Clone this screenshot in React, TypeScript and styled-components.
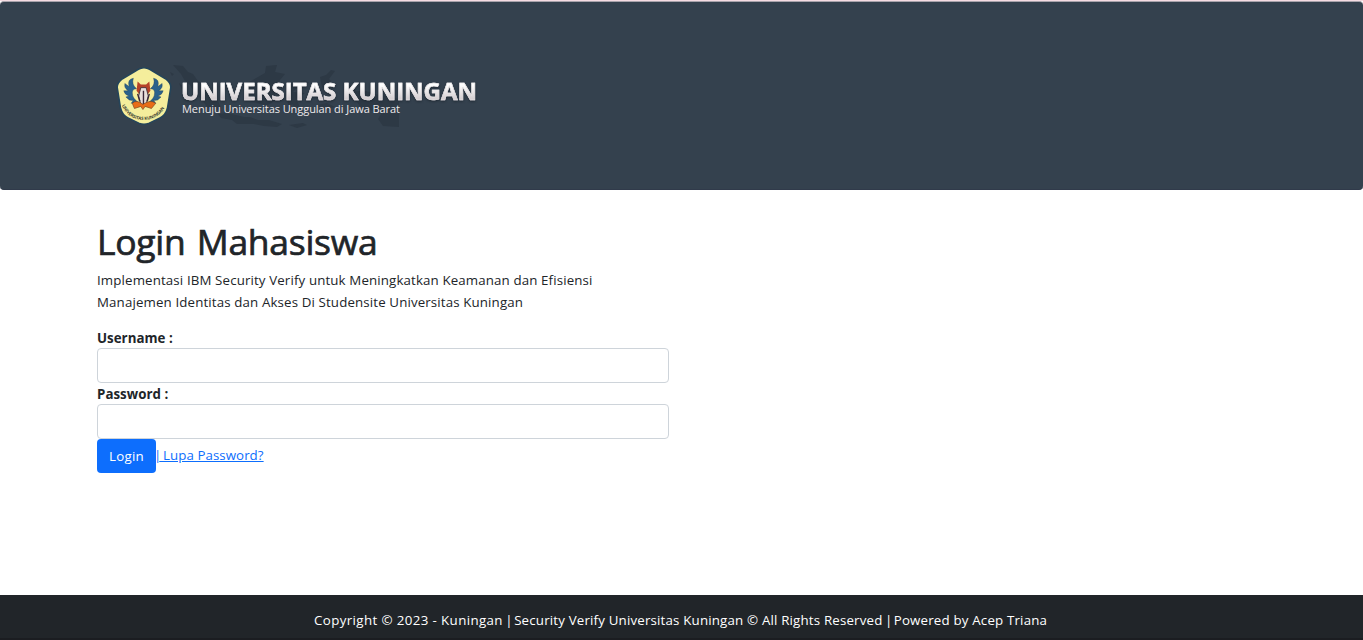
import React from "react";
import styled, { createGlobalStyle } from "styled-components";

const GlobalStyle = createGlobalStyle`
  *, *::before, *::after { box-sizing: border-box; }
  body {
    margin: 0;
    background: #fff;
    color: #212529;
    font-family: "Open Sans", "Noto Sans", sans-serif;
    font-size: 13.3px;
    line-height: 22px;
    overflow: hidden;
  }
`;

const Page = styled.div`
  display: flex;
  flex-direction: column;
  height: 640px;
  border-top: 1px solid #f6dce3;
`;

const Banner = styled.header`
  height: 189px;
  flex: none;
  padding: 61px 0 0 116px;
  margin-bottom: 30px;
  background: #34414e;
  border-top: 1px solid #a9a3ac;
  border-bottom: 1px solid #303a4a;
  border-radius: 4px;
`;

const Brand = styled.div`
  display: grid;
  grid-template-columns: 65px 1fr;
  width: 364px;
  height: 68px;
`;

const Crest = styled.svg`
  grid-area: 1 / 1;
  width: 56px;
  height: 58px;
  margin-top: 4px;
`;

const Archipelago = styled.svg`
  grid-area: 1 / 1 / 2 / 3;
  width: 240px;
  height: 66px;
  margin-left: 50px;
`;

const BrandText = styled.div`
  grid-area: 1 / 2;
  padding-top: 16px;
  color: #eeeaec;
  white-space: nowrap;
`;

const BrandName = styled.div`
  font-size: 24px;
  line-height: 24px;
  font-weight: 700;
  color: transparent;
  background: linear-gradient(#ffffff 25%, #d6d0d3 80%);
  background-clip: text;
  -webkit-text-stroke: 0.5px #e9e5e7;
  filter: drop-shadow(0 1px 1px #1f2933);
`;

const Tagline = styled.div`
  margin: -1px 0 0 1px;
  font-size: 11px;
  line-height: 14px;
  letter-spacing: -0.06px;
`;

const Main = styled.main`
  flex: 1;
  padding-left: 97px;
`;

const Title = styled.h1`
  margin: 0 0 6px;
  font-size: 35.5px;
  line-height: 43px;
  font-weight: 500;
  letter-spacing: -0.3px;
  word-spacing: 2.5px;
  -webkit-text-stroke: 0.7px #212529;
  white-space: nowrap;
`;

const Lead = styled.p`
  margin: 0 0 14px;
  white-space: nowrap;
`;

const Line = styled.span<{ $spacing: number }>`
  display: block;
  letter-spacing: ${(p) => p.$spacing}px;
`;

const Form = styled.form`
  display: flex;
  flex-direction: column;
  width: 572px;
`;

const Label = styled.label`
  height: 21px;
  font-weight: 700;
  letter-spacing: 0.03px;
  line-height: 22px;
`;

const Field = styled.input`
  height: 35px;
  padding: 6px 12px;
  border: 1px solid #ced4da;
  border-radius: 4px;
  background: #fff;
  font: inherit;
`;

const Actions = styled.div`
  display: flex;
`;

const LoginButton = styled.button`
  width: 59px;
  height: 34px;
  padding: 0;
  border: 0;
  border-radius: 4px;
  background: #0d6efd;
  color: #fff;
  font: inherit;
  letter-spacing: 0.3px;
`;

const ForgotLink = styled.a`
  margin-top: 5px;
  margin-left: -2px;
  color: #0d6efd;
  letter-spacing: 0.06px;
  text-decoration: underline;
`;

const Pipe = styled.span<{ $spacing: number }>`
  letter-spacing: ${(p) => p.$spacing}px;
`;

const Footer = styled.footer`
  height: 45px;
  padding-top: 14px;
  padding-left: 314px;
  background: #212529;
  border-bottom: 2px solid #1b1d21;
  color: #fff;
  letter-spacing: 0.18px;
  white-space: nowrap;
`;

const Copyright = styled.span`
  letter-spacing: 0.39px;
`;

function CrestMark() {
  return (
    <Crest viewBox="1.7 1.2 52.6 55.6" preserveAspectRatio="none">
      <path d="M28 2 Q31 2 36 5 L49 13 Q54 17 53 22 L50 41 Q48 48 43 50 L33 55 Q28 57 23 55 L13 50 Q8 48 6 41 L3 22 Q2 17 7 13 L20 5 Q25 2 28 2Z" fill="#f5ee9c" stroke="#24445a" strokeWidth="1.5" />
      <g fill="#2b628c" stroke="#24445a" strokeWidth=".4">
        <path d="M18 12 Q12 13 14 20 L10 17 Q9 21 13 24 L9 24 Q10 28 14 29 L11 30 Q14 34 18 33 L16 36 L24 36 Q17 32 17 26 Q17 22 21 22 Q16 18 18 12Z" />
        <path d="M37 12 Q43 13 41 20 L45 17 Q46 21 42 24 L46 24 Q45 28 41 29 L44 30 Q41 34 37 33 L39 36 L31 36 Q38 32 38 26 Q38 22 34 22 Q39 18 37 12Z" />
      </g>
      <path d="M22 15 L25 18 L30 18 L33 15 L34 24 L31 28 L30 22 L25 22 L24 28 L21 24Z" fill="#b64228" />
      <path d="M25 21 H30 L32 29 L30 37 H25 L23 29Z" fill="#e8dfdc" stroke="#3b2e38" strokeWidth=".8" />
      <path d="M27.5 24 V38 M22 27 L24 34 M33 27 L31 34" stroke="#392738" strokeWidth="1.3" />
      <path d="M17 36 Q21 32 27 37 Q34 32 39 36 L35 41 L29 39 L27 42 L25 39 L19 41Z" fill="#e86c17" stroke="#75411e" strokeWidth=".6" />
      <path id="crest-arc" d="M7 38 Q14 52 28 52 Q43 51 49 37" fill="none" />
      <text fontFamily="Open Sans, sans-serif" fontSize="4.2" fontWeight="700" fill="#3d3f33">
        <textPath href="#crest-arc" textLength="50">UNIVERSITAS KUNINGAN</textPath>
      </text>
    </Crest>
  );
}

function IslandMap() {
  return (
    <Archipelago viewBox="0 0 240 66" fill="#2d3945">
      <path d="M7 2 L17 3 L22 9 L27 11 L32 18 L39 22 L43 29 L50 33 L55 45 L47 49 L41 44 L37 38 L28 29 L24 22 L19 18 L15 11Z M4 9 l4 2 -2 2z M13 20 l5 4 -2 3z M20 30 l5 5 -3 1z" />
      <path d="M81 20 L85 18 L92 14 L99 10 L100 3 L111 2 L109 9 L119 11 L114 17 L112 23 L109 30 L108 38 L101 43 L94 41 L84 38 L81 29Z" />
      <path d="M52 51 L60 50 L70 52 L78 54 L84 54 L92 57 L103 57 L116 61 L111 64 L98 63 L88 61 L71 61 L66 57 L55 55Z" />
      <path d="M123 22 L139 17 L143 20 L131 25 L127 29 L139 30 L130 36 L135 46 L130 46 L126 41 L123 46 L121 36Z" />
      <path d="M154 14 L160 12 L165 7 L169 8 L163 16 L165 18 L161 28 L156 24Z M151 42 l10 -2 8 4 -12 3z M123 62 l14 -2 4 2 -10 3z" />
      <path d="M178 23 L184 22 L190 28 L200 28 L209 31 L219 33 L233 36 L233 64 L217 63 L212 56 L215 51 L205 47 L195 45 L191 39 L184 36Z" />
    </Archipelago>
  );
}

export default function App() {
  return (
    <>
      <GlobalStyle />
      <Page>
        <Banner>
          <Brand>
            <IslandMap />
            <CrestMark />
            <BrandText>
              <BrandName>UNIVERSITAS KUNINGAN</BrandName>
              <Tagline>Menuju Universitas Unggulan di Jawa Barat</Tagline>
            </BrandText>
          </Brand>
        </Banner>
        <Main>
          <Title>Login Mahasiswa</Title>
          <Lead>
            <Line $spacing={0.13}>Implementasi IBM Security Verify untuk Meningkatkan Keamanan dan Efisiensi</Line>
            <Line $spacing={0.133}>Manajemen Identitas dan Akses Di Studensite Universitas Kuningan</Line>
          </Lead>
          <Form>
            <Label htmlFor="username">Username :</Label>
            <Field id="username" type="text" />
            <Label htmlFor="password">Password :</Label>
            <Field id="password" type="password" />
            <Actions>
              <LoginButton type="button">Login</LoginButton>
              <ForgotLink href="#"><Pipe $spacing={-1.8}>|</Pipe> Lupa Password?</ForgotLink>
            </Actions>
          </Form>
        </Main>
        <Footer>
          <Copyright>Copyright © 2023 - Kuningan</Copyright>
          <Pipe $spacing={-1}> | </Pipe>
          Security Verify Universitas Kuningan © All Rights Reserved
          <Pipe $spacing={-1}> | </Pipe>
          Powered by Acep Triana
        </Footer>
      </Page>
    </>
  );
}
